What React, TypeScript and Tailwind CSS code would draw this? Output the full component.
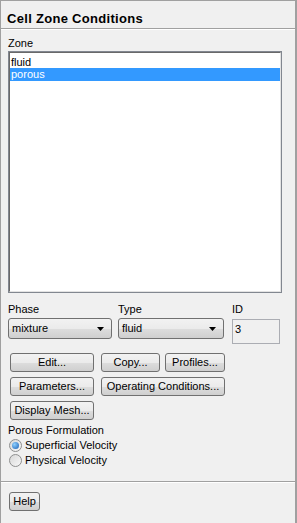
const font = { fontFamily: '"Liberation Sans", Arial, sans-serif' };

function Btn({ label, className = '' }: { label: string; className?: string }) {
  return (
    <div
      className={`h-[19px] flex items-center justify-center rounded-[3px] border border-[#707070] bg-[linear-gradient(#f2f2f2_0%,#ebebeb_50%,#dddddd_51%,#cfcfcf_100%)] text-[11px] text-black leading-none ${className}`}
    >
      {label}
    </div>
  );
}

function Dropdown({ value, className = '' }: { value: string; className?: string }) {
  return (
    <div
      className={`h-[21px] flex items-center justify-between pl-[3px] pr-[7px] rounded-[3px] border border-[#707070] bg-[linear-gradient(#f2f2f2_0%,#ebebeb_50%,#dddddd_51%,#cfcfcf_100%)] text-[11px] leading-none ${className}`}
    >
      <span>{value}</span>
      <svg width="7" height="4" viewBox="0 0 7 4">
        <path d="M0 0h7L3.5 4z" fill="#000" />
      </svg>
    </div>
  );
}

function Radio({ label, checked }: { label: string; checked?: boolean }) {
  return (
    <div className="flex items-center h-[15px] gap-[3px] pl-[1px]">
      <div className="w-[13px] h-[13px] rounded-full border border-[#8e8f8f] bg-[linear-gradient(135deg,#d8d8d8,#f8f8f8)] flex items-center justify-center">
        {checked && <div className="w-[7px] h-[7px] rounded-full bg-[radial-gradient(circle_at_35%_35%,#8fd0ff,#1a5fb4)]" />}
      </div>
      <span className="text-[11px] leading-none">{label}</span>
    </div>
  );
}

export default function App() {
  return (
    <div style={font} className="w-[297px] h-[523px] bg-[#f0f0f0] border-t border-l border-r-2 border-t-[#a0a0a0] border-l-[#a0a0a0] border-r-[#a0a0a0] flex flex-col text-black">
      <div className="h-[28px] pl-[6px] pt-[11px] border-b border-[#a0a0a0] shrink-0">
        <h1 className="text-[13px] font-bold leading-none tracking-[0.3px]">Cell Zone Conditions</h1>
      </div>
      <div className="border-t border-white" />

      <div className="pl-[7px] pr-[13px] pt-[7px] flex flex-col">
        <div className="text-[11px] leading-[13px]">Zone</div>
        <div className="mt-[1px] h-[242px] border border-[#828790]">
          <div className="h-full border-t border-l border-[#696969] border-r border-b border-r-[#e3e3e3] border-b-[#e3e3e3] bg-white">
            <div className="text-[11px] leading-[12px] pl-[1px] pt-[3px] h-[15px]">fluid</div>
            <div className="text-[11px] leading-[13px] pl-[1px] bg-[#3399ff] text-white h-[13px]">porous</div>
          </div>
        </div>

        <div className="mt-[10px] flex gap-[6px]">
          <div className="w-[104px] flex flex-col">
            <div className="text-[11px] leading-[13px]">Phase</div>
            <Dropdown value="mixture" className="mt-[2px] w-[104px]" />
          </div>
          <div className="w-[106px] flex flex-col">
            <div className="text-[11px] leading-[13px]">Type</div>
            <Dropdown value="fluid" className="mt-[2px] w-[106px]" />
          </div>
          <div className="ml-[2px] w-[48px] flex flex-col">
            <div className="text-[11px] leading-[13px]">ID</div>
            <div className="mt-[3px] h-[25px] border border-[#abadb3] bg-[#f0f0f0] text-[11px] leading-none pl-[2px] pt-[4px]">3</div>
          </div>
        </div>

        <div className="mt-[9px] pl-[2px] flex flex-col gap-[5px]">
          <div className="flex">
            <Btn label="Edit..." className="w-[84px]" />
            <Btn label="Copy..." className="ml-[7px] w-[59px]" />
            <Btn label="Profiles..." className="ml-[5px] w-[60px]" />
          </div>
          <div className="flex">
            <Btn label="Parameters..." className="w-[84px]" />
            <Btn label="Operating Conditions..." className="ml-[7px] w-[124px]" />
          </div>
          <div className="flex">
            <Btn label="Display Mesh..." className="w-[84px]" />
          </div>
        </div>

        <div className="mt-[4px] text-[11px] leading-[13px]">Porous Formulation</div>
        <div className="mt-[1px] flex flex-col">
          <Radio label="Superficial Velocity" checked />
          <Radio label="Physical Velocity" />
        </div>
      </div>

      <div className="mt-auto mb-[12px]">
        <div className="border-t border-[#a0a0a0]" />
        <div className="border-t border-white" />
        <div className="pl-[8px] pt-[9px]">
          <Btn label="Help" className="w-[31px]" />
        </div>
      </div>
    </div>
  );
}
